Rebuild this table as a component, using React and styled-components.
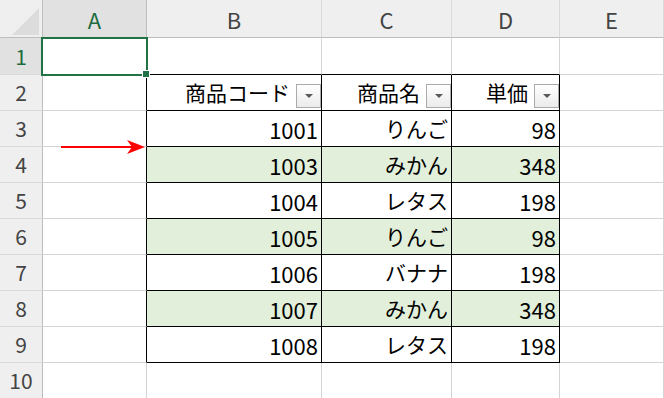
import React from "react";
import styled, { createGlobalStyle } from "styled-components";

const GlobalStyle = createGlobalStyle`
  html, body {
    margin: 0;
    padding: 0;
    background: #ffffff;
    overflow: hidden;
  }
  body {
    font-family: "Noto Sans CJK JP", "Noto Sans", sans-serif;
  }
`;

const GRID = "#d4d4d4";
const INK = "#000000";
const SEL = "#217346";

const Sheet = styled.div`
  position: relative;
  display: grid;
  grid-template-columns: 43px 104px 175px 130px 108px 104px;
  grid-template-rows: 38px 37px repeat(9, 36px);
  width: 664px;
  height: 398px;
  overflow: hidden;
  font-family: "Noto Sans CJK JP", "Noto Sans", sans-serif;
`;

const Corner = styled.div`
  position: relative;
  background: #efefef;
  border-right: 1px solid #bdbdbd;
  border-bottom: 1px solid #bdbdbd;
  box-sizing: border-box;
  display: flex;
  align-items: flex-end;
  justify-content: flex-end;
  padding: 0 3px 2px 0;
`;

const CornerMark = styled.svg`
  display: block;
`;

const ColHeader = styled.div`
  box-sizing: border-box;
  background: ${(p) => (p.$active ? "#e1e1e1" : "#efefef")};
  border-right: 1px solid ${(p) => (p.$active ? "#bdbdbd" : "#d9d9d9")};
  border-bottom: 1px solid #bdbdbd;
  color: ${(p) => (p.$active ? "#1d6b3f" : "#444444")};
  font-size: 22px;
  display: flex;
  align-items: center;
  justify-content: center;
  line-height: 1;
`;

const RowHeader = styled.div`
  box-sizing: border-box;
  background: ${(p) => (p.$active ? "#e1e1e1" : "#efefef")};
  border-right: 1px solid #bdbdbd;
  border-bottom: 1px solid #dadada;
  color: ${(p) => (p.$active ? "#1d6b3f" : "#444444")};
  font-size: 21px;
  display: flex;
  align-items: center;
  justify-content: center;
  line-height: 1;
`;

const Cell = styled.div`
  position: relative;
  z-index: ${(p) => (p.$top ? 2 : "auto")};
  box-sizing: border-box;
  background: ${(p) => (p.$fill ? "#e2efda" : "#ffffff")};
  border-right: 1px solid ${(p) => (p.$inkRight ? INK : GRID)};
  border-bottom: 1px solid ${(p) => (p.$inkBottom ? INK : GRID)};
  color: #000000;
  font-size: ${(p) => (p.$numeric ? "22px" : "21px")};
  line-height: 1;
  display: flex;
  align-items: center;
  justify-content: flex-end;
  gap: 6px;
  padding-right: ${(p) => (p.$head ? "0" : "3px")};
  white-space: nowrap;
`;

const FilterButton = styled.span`
  box-sizing: border-box;
  align-self: flex-end;
  margin-bottom: 2px;
  width: 25px;
  height: 24px;
  flex: none;
  border: 1px solid #ababab;
  background: linear-gradient(#ffffff, #ebebeb);
  display: flex;
  align-items: center;
  justify-content: center;
`;

const Caret = styled.span`
  width: 0;
  height: 0;
  border-left: 4.5px solid transparent;
  border-right: 4.5px solid transparent;
  border-top: 4px solid #595959;
`;

const Selection = styled.div`
  position: absolute;
  left: -2px;
  top: -1px;
  width: 107px;
  height: 39px;
  box-sizing: border-box;
  border: 2px solid ${SEL};
  pointer-events: none;
`;

const FillHandle = styled.div`
  position: absolute;
  right: -3px;
  bottom: -3px;
  width: 6px;
  height: 6px;
  background: ${SEL};
  box-shadow: 0 0 0 1px #ffffff;
`;

const Pointer = styled.svg`
  position: absolute;
  left: 58px;
  top: 138px;
  pointer-events: none;
`;

const columns = ["A", "B", "C", "D", "E"];

const heading = ["商品コード", "商品名", "単価"];

const items = [
  ["1001", "りんご", "98"],
  ["1003", "みかん", "348"],
  ["1004", "レタス", "198"],
  ["1005", "りんご", "98"],
  ["1006", "バナナ", "198"],
  ["1007", "みかん", "348"],
  ["1008", "レタス", "198"],
];

// Rows 2..9 of columns B..D hold the product list; rows 1 and 10 are empty.
function contentAt(row, col) {
  if (col < 1 || col > 3) return null;
  if (row === 2) return { text: heading[col - 1], head: true };
  if (row >= 3 && row <= 9) return { text: items[row - 3][col - 1], head: false };
  return null;
}

export default function App() {
  const rows = Array.from({ length: 10 }, (_, i) => i + 1);
  return (
    <>
      <GlobalStyle />
      <Sheet>
        <Corner>
          <CornerMark width="27" height="27" viewBox="0 0 27 27">
            <polygon points="27,0 27,27 0,27" fill="#dcdcdc" />
          </CornerMark>
        </Corner>
        {columns.map((c, i) => (
          <ColHeader key={c} $active={i === 0}>
            {c}
          </ColHeader>
        ))}
        {rows.map((r) => (
          <React.Fragment key={r}>
            <RowHeader $active={r === 1}>{r}</RowHeader>
            {columns.map((c, col) => {
              const inTable = r >= 2 && r <= 9;
              const content = contentAt(r, col);
              const inkRight = inTable && col <= 3;
              const inkBottom = col >= 1 && col <= 3 && r >= 1 && r <= 9;
              const fill = col >= 1 && col <= 3 && (r === 4 || r === 6 || r === 8);
              const active = r === 1 && col === 0;
              const numeric = !!content && /^\d+$/.test(content.text);
              return (
                <Cell
                  key={c + r}
                  $inkRight={inkRight}
                  $inkBottom={inkBottom}
                  $fill={fill}
                  $head={content?.head}
                  $numeric={numeric}
                  $top={active}
                >
                  {content && <span>{content.text}</span>}
                  {content?.head && (
                    <FilterButton>
                      <Caret />
                    </FilterButton>
                  )}
                  {active && (
                    <Selection>
                      <FillHandle />
                    </Selection>
                  )}
                </Cell>
              );
            })}
          </React.Fragment>
        ))}
        <Pointer width="90" height="18" viewBox="0 0 90 18">
          <line x1="3" y1="9" x2="74" y2="9" stroke="#ff0000" strokeWidth="2" />
          <polygon points="87,9 69,2 74,9 69,16" fill="#ff0000" />
        </Pointer>
      </Sheet>
    </>
  );
}
